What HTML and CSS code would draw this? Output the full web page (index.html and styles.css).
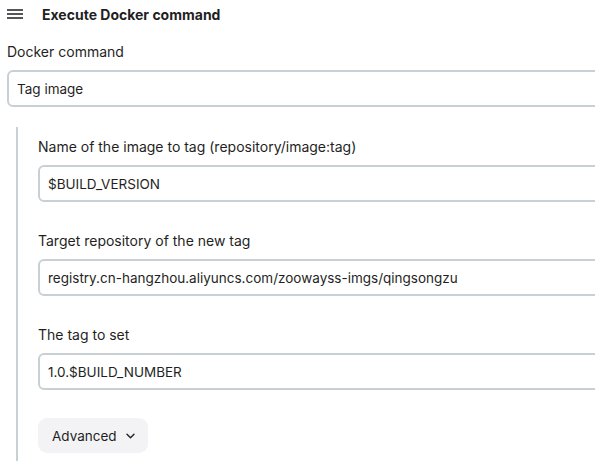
FILE: index.html
```html
<!DOCTYPE html>
<html>
<head>
<meta charset="utf-8">
<link rel="stylesheet" href="styles.css">
</head>
<body>
<div class="header">
  <svg class="burger" width="16" height="10" viewBox="0 0 16 10"><path d="M0 1h16M0 5h16M0 9h16" stroke="#1f1f24" stroke-width="1.4"/></svg>
  <span class="title">Execute Docker command</span>
</div>
<div class="field top">
  <label class="label">Docker command</label>
  <div class="input">Tag image</div>
</div>
<div class="nested">
  <div class="field">
    <label class="label">Name of the image to tag (repository/image:tag)</label>
    <div class="input">$BUILD_VERSION</div>
  </div>
  <div class="field">
    <label class="label">Target repository of the new tag</label>
    <div class="input">registry.cn-hangzhou.aliyuncs.com/zoowayss-imgs/qingsongzu</div>
  </div>
  <div class="field">
    <label class="label">The tag to set</label>
    <div class="input">1.0.$BUILD_NUMBER</div>
  </div>
  <button class="adv">Advanced
    <svg class="chev" width="9" height="6" viewBox="0 0 9 6"><path d="M1 1.2l3.5 3.5 3.5-3.5" fill="none" stroke="#1f1f24" stroke-width="1.4" stroke-linecap="round" stroke-linejoin="round"/></svg>
  </button>
</div>
</body>
</html>
```
FILE: styles.css
```css
html, body { margin: 0; padding: 0; background: #fff; }
body {
  font-family: Inter, "Noto Sans", sans-serif;
  font-size: 13.5px;
  color: #1f1f24;
  padding: 0 0 0 7px;
  overflow: hidden;
  width: 640px;
}
.header {
  display: flex;
  align-items: center;
  height: 28px;
}
.burger { margin-right: 19px; }
.title { font-weight: 700; font-size: 14px; }
.field { display: flex; flex-direction: column; }
.label {
  font-size: 14px;
  line-height: 20px;
  margin-top: 12px;
  margin-bottom: 8px;
  font-weight: 400;
}
.top .label { margin-top: 14px; margin-bottom: 8px; }
.input {
  height: 33px;
  border: 2px solid #c9d0d4;
  border-radius: 6px;
  padding: 0 8px;
  display: flex;
  align-items: center;
  white-space: nowrap;
  box-sizing: content-box;
}
.nested {
  display: flex;
  flex-direction: column;
  align-items: stretch;
  margin-top: 20px;
  margin-left: 9px;
  border-left: 2px solid #c9d0d4;
  padding-left: 20px;
  padding-bottom: 20px;
}
.nested .field { margin-bottom: 17px; }
.nested .field:first-child .label { margin-top: 10px; }
.adv {
  align-self: flex-start;
  margin-top: 11px;
  height: 35px;
  width: 110px;
  border: none;
  border-radius: 9px;
  background: #f3f3f6;
  font: inherit;
  color: #1f1f24;
  display: flex;
  align-items: center;
  gap: 9px;
  padding: 0 14px;
}
.chev { flex-shrink: 0; }
```
